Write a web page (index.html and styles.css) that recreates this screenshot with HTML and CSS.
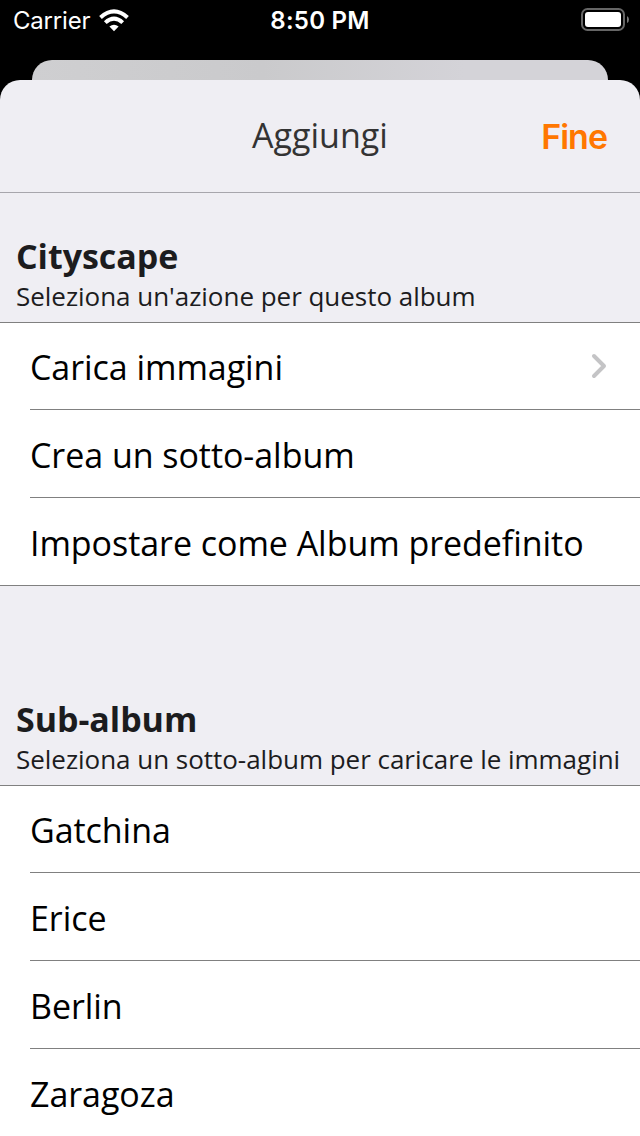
FILE: index.html
```html
<!DOCTYPE html>
<html lang="it">
<head>
<meta charset="utf-8">
<title>Aggiungi</title>
<link rel="stylesheet" href="styles.css">
</head>
<body>
<div class="screen">
  <header class="status">
    <div class="carrier"><span class="carrier-name">Carrier</span>
      <svg class="wifi" width="30" height="23" viewBox="0 0 30 23"><g fill="none" stroke="#fff" stroke-width="4"><path d="M1.5 8.4 Q15 -3.8 28.5 8.4"/><path d="M6.3 13.6 Q15 5.6 23.7 13.6"/></g><path d="M10.4 17.6 Q15 14 19.6 17.6 L15 22.2Z" fill="#fff"/></svg>
    </div>
    <time class="clock">8:50 PM</time>
    <svg class="battery" width="50" height="24" viewBox="0 0 50 24"><rect x="1" y="1" width="42" height="21" rx="5.5" fill="none" stroke="#666" stroke-width="2"/><rect x="4" y="4" width="36" height="15" rx="3" fill="#fff"/><path d="M46 8 Q48 9 48 11.5 Q48 14 46 15Z" fill="#777"/></svg>
  </header>
  <div class="back-card"></div>
  <main class="sheet">
    <nav class="navbar"><h1 class="title">Aggiungi</h1><span class="done">Fine</span></nav>
    <section class="section">
      <div class="heading"><h2 class="name">Cityscape</h2><p class="hint">Seleziona un'azione per questo album</p></div>
      <ul class="list">
        <li class="row"><span>Carica immagini</span><svg class="chevron" width="18" height="28" viewBox="0 0 18 28"><path d="M4 4 L14 14 L4 24" fill="none" stroke="#c4c4c6" stroke-width="4" stroke-linecap="round" stroke-linejoin="round"/></svg></li>
        <li class="row"><span>Crea un sotto-album</span></li>
        <li class="row"><span>Impostare come Album predefinito</span></li>
      </ul>
    </section>
    <section class="section section-sub">
      <div class="heading"><h2 class="name">Sub-album</h2><p class="hint">Seleziona un sotto-album per caricare le immagini</p></div>
      <ul class="list">
        <li class="row"><span>Gatchina</span></li>
        <li class="row"><span>Erice</span></li>
        <li class="row"><span>Berlin</span></li>
        <li class="row"><span>Zaragoza</span></li>
      </ul>
    </section>
  </main>
</div>
</body>
</html>
```
FILE: styles.css
```css
* { box-sizing: border-box; margin: 0; padding: 0; }
body { background: #000; font-family: "Open Sans", sans-serif; }
.screen { width: 640px; height: 1136px; overflow: hidden; background: #000; }
.status { height: 60px; display: grid; grid-template-columns: 1fr auto 1fr; align-items: start; color: #fff; font: 24px/42px Inter, sans-serif; }
.carrier { display: flex; padding-left: 13px; gap: 9px; }
.carrier-name { letter-spacing: -0.2px; }
.wifi { margin-top: 9px; }
.clock { font-weight: 600; letter-spacing: 0.25px; }
.battery { justify-self: end; margin: 8px 9px 0 0; }
.back-card { height: 20px; margin: 0 32px; border-radius: 20px 20px 0 0; background: linear-gradient(90deg, #cfcfd1, #cacacc 40%, #d4d3d8 75%); }
.sheet { height: 1056px; overflow: hidden; border-radius: 20px 20px 0 0; background: #efeef3; }
.navbar { height: 113px; display: grid; grid-template-columns: 1fr auto 1fr; align-items: center; padding: 0 33px; border-bottom: 1px solid #a7a6ac; }
.title { grid-column: 2; padding-bottom: 2px; font-size: 34px; font-weight: 400; color: #333; }
.done { justify-self: end; padding-top: 2px; font: 600 34px/40px Inter, sans-serif; color: #ff7700; letter-spacing: -1px; }
.heading { height: 129px; padding: 39px 16px 0; color: #1c1c1e; }
.section-sub .heading { height: 199px; padding-top: 109px; }
.name { font-size: 34px; line-height: 48px; font-weight: 700; letter-spacing: -0.05px; }
.hint { font-size: 26px; line-height: 32px; letter-spacing: -0.03px; white-space: nowrap; }
.list { list-style: none; background: #fff; border-top: 1px solid #808080; border-bottom: 1px solid #808080; }
.row { height: 88px; margin-left: 30px; display: flex; align-items: center; justify-content: space-between; font-size: 34px; letter-spacing: -0.05px; font-variant-ligatures: common-ligatures; color: #000; border-bottom: 1px solid #808080; white-space: nowrap; }
.row span { padding-top: 2px; }
.row:first-child { height: 87px; }
.row:last-child { height: 87px; border-bottom: 0; }
.chevron { margin-right: 32px; }
```
